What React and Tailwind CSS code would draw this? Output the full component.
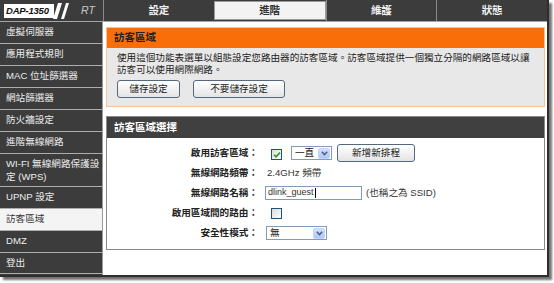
const menu = [
  '虛擬伺服器',
  '應用程式規則',
  'MAC 位址篩選器',
  '網站篩選器',
  '防火牆設定',
  '進階無線網路',
  'WPS',
  'UPNP 設定',
  '訪客區域',
  'DMZ',
  '登出',
]

function Arrow() {
  return (
    <div className="flex items-center justify-center w-[12px] h-[11px] my-[1px] mr-[1px] rounded-[2px] bg-gradient-to-b from-[#d3e0fd] to-[#b2c6f3] border border-[#c3d3fd]">
      <svg width="7" height="5" viewBox="0 0 7 5">
        <path d="M0.8 0.8 L3.5 3.6 L6.2 0.8" fill="none" stroke="#4d6185" strokeWidth="1.6" />
      </svg>
    </div>
  )
}

function Checkbox({ checked }) {
  return (
    <div className="w-[11px] h-[11px] border border-[#1c5180] bg-gradient-to-br from-[#dcdcd7] to-white flex items-center justify-center">
      {checked && (
        <svg width="8" height="8" viewBox="0 0 8 8">
          <path d="M1 3.8 L3 5.9 L7 1.6" fill="none" stroke="#21a121" strokeWidth="1.6" />
        </svg>
      )}
    </div>
  )
}

function Button({ children, className }) {
  return (
    <button className={`h-[18px] border border-[#55687c] rounded-[3px] bg-gradient-to-b from-white to-[#e4e4e4] text-[9.6px] text-[#222] leading-none ${className}`}>
      {children}
    </button>
  )
}

export default function App() {
  return (
    <div className="w-[554px] h-[283px] bg-white font-['Liberation_Sans','Noto_Sans_CJK_TC',sans-serif]">
      <div className="w-[549px] h-[277px] bg-[#3c3c3c] border-r-2 border-b-2 border-[#2e2e2e] shadow-[3px_3px_2px_rgba(0,0,0,0.55)] flex flex-col">

        {/* Top bar */}
        <div className="h-[22px] flex border-b border-[#a5a5a5]">
          <div className="w-[103px] flex items-center pl-[4px]">
            <div className="h-[14px] w-[50px] bg-white flex items-center pl-[2px] whitespace-nowrap overflow-hidden">
              <span className="italic font-bold text-[9.5px] tracking-[-0.2px] text-[#111] leading-none">DAP-1350</span>
            </div>
            <svg width="20" height="16" viewBox="0 0 20 16" className="-ml-[1px]">
              <polygon points="5,0 9,0 4,16 0,16" fill="#fff" />
              <polygon points="13,0 16,0 11,16 8,16" fill="#fff" />
            </svg>
            <span className="ml-[8px] italic text-[10.5px] text-[#c8c8c8] leading-none">RT</span>
          </div>
          {['設定', '進階', '維護', '狀態'].map((t) => (
            <div
              key={t}
              className={`flex-1 flex items-center justify-center border-l border-[#8a8a8a] text-[10.5px] font-bold ${
                t === '進階'
                  ? 'bg-[#f3f3f3] text-[#333] border border-[#9a9a9a] my-[1px]'
                  : 'text-[#f0f0f0]'
              }`}
            >
              {t}
            </div>
          ))}
        </div>

        <div className="flex flex-1">
          {/* Sidebar */}
          <div className="w-[103px] flex flex-col border-r border-[#9a9a9a]">
            {menu.map((m) => (
              <div
                key={m}
                className={`border-b border-[#adadad] pl-[6px] flex items-center text-[9.6px] ${
                  m === 'WPS' ? 'h-[33px] leading-[13px]' : m === '登出' ? 'h-[21px]' : 'h-[22px]'
                } ${m === '訪客區域' ? 'bg-[#f4f4f4] text-[#333]' : 'text-[#ececec]'}`}
              >
                {m === 'WPS' ? (
                  <span>WI-FI 無線網路保護設<br />定 (WPS)</span>
                ) : (
                  m
                )}
              </div>
            ))}
          </div>

          {/* Main */}
          <div className="flex-1 bg-white pl-[3px] pr-[2px] pt-[5px] flex flex-col">

            <div className="border border-[#f3c49a] bg-[#e8e8e8]">
              <div className="h-[20px] bg-[#fa6e0a] pl-[7px] flex items-center text-[10.5px] font-bold text-[#222]">
                訪客區域
              </div>
              <div className="pl-[10px] pr-[8px] pt-[4px] pb-[8px]">
                <p className="text-[9.6px] leading-[12px] text-[#222]">
                  使用這個功能表選單以組態設定您路由器的訪客區域。訪客區域提供一個獨立分隔的網路區域以讓
                  <br />
                  訪客可以使用網際網路。
                </p>
                <div className="flex gap-[13px] mt-[4px]">
                  <Button className="w-[63px]">儲存設定</Button>
                  <Button className="w-[92px]">不要儲存設定</Button>
                </div>
              </div>
            </div>

            <div className="mt-[9px] border border-[#8a8a8a]">
              <div className="h-[21px] bg-[#404040] pl-[7px] flex items-center text-[10.5px] font-bold text-white">
                訪客區域選擇
              </div>
              <div className="pt-[5px] pb-[6px] grid grid-cols-[151px_1fr] auto-rows-[20px] gap-x-[7px] items-center text-[9.6px] text-[#222]">
                <div className="text-right font-bold">啟用訪客區域：</div>
                <div className="flex items-center">
                  <div className="ml-[6px] mt-[3px]"><Checkbox checked /></div>
                  <div className="ml-[9px] w-[41px] h-[14px] border border-[#7f9db9] bg-white flex items-center justify-between">
                    <span className="pl-[3px] leading-none">一直</span>
                    <Arrow />
                  </div>
                  <Button className="ml-[5px] w-[78px]">新增新排程</Button>
                </div>

                <div className="text-right font-bold">無線網路頻帶：</div>
                <div className="pl-[2px] text-[#333]">2.4GHz 頻帶</div>

                <div className="text-right font-bold">無線網路名稱：</div>
                <div className="flex items-center">
                  <div className="w-[97px] h-[14px] border border-[#7f9db9] bg-white flex items-center pl-[2px] leading-none text-[9px] text-[#333]">
                    dlink_guest<span className="w-px h-[10px] bg-black ml-px" />
                  </div>
                  <span className="ml-[4px] text-[#333]">(也稱之為 SSID)</span>
                </div>

                <div className="text-right font-bold">啟用區域間的路由：</div>
                <div className="flex items-center">
                  <div className="ml-[6px]"><Checkbox /></div>
                </div>

                <div className="text-right font-bold">安全性模式：</div>
                <div className="flex items-center">
                  <div className="ml-[1px] w-[61px] h-[14px] border border-[#7f9db9] bg-white flex items-center justify-between">
                    <span className="pl-[3px] leading-none">無</span>
                    <Arrow />
                  </div>
                </div>
              </div>
            </div>

          </div>
        </div>
      </div>
    </div>
  )
}
